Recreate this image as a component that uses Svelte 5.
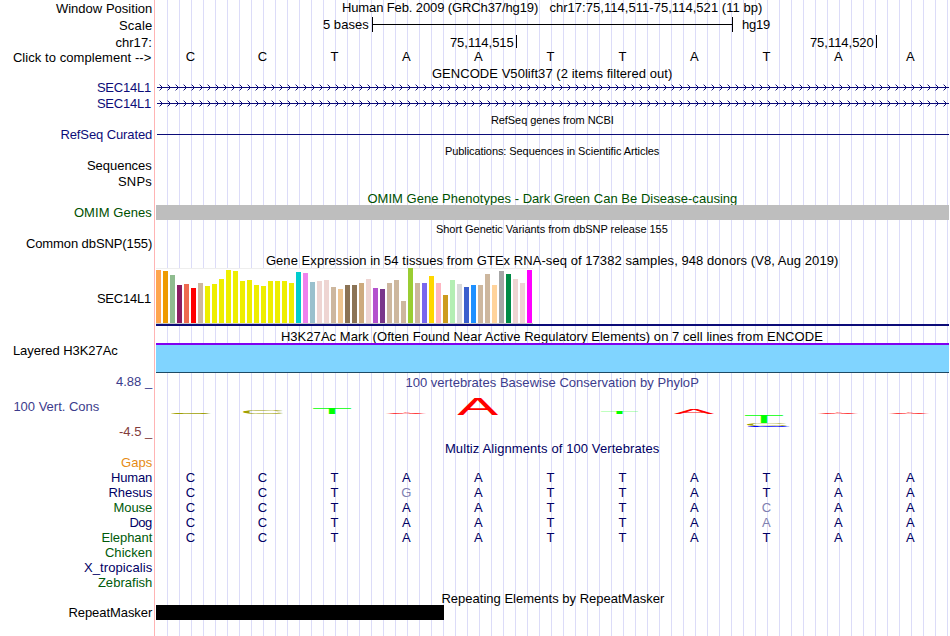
<script>
  const navy = '#0c0c78';
  const darkBlue = '#000064';
  const green = '#005a0a';
  const bases = 'CCTAATTATAA'.split('');

  // gene expression: [color, height]
  const tissues = [
    ['#ffa54f', 53], ['#ee9a00', 52], ['#8fbc8f', 48], ['#8b1c62', 38], ['#ee6a50', 39],
    ['#ff0000', 35], ['#cdb79e', 40], ['#eeee00', 37], ['#eeee00', 39], ['#eeee00', 44],
    ['#eeee00', 53], ['#eeee00', 52], ['#eeee00', 42], ['#eeee00', 43], ['#eeee00', 38],
    ['#eeee00', 37], ['#eeee00', 42], ['#eeee00', 42], ['#eeee00', 42], ['#eeee00', 40],
    ['#00cdcd', 51], ['#ee82ee', 50], ['#9ac0cd', 41], ['#eed5d2', 42], ['#eed5d2', 43],
    ['#cdb79e', 36], ['#eec591', 34], ['#8b7355', 38], ['#8b7355', 38], ['#cdaa7d', 40],
    ['#eed5d2', 44], ['#b452cd', 35], ['#7a378b', 34], ['#cdb79e', 40], ['#cdb79e', 43],
    ['#cdb79e', 22], ['#9acd32', 55], ['#cdb79e', 40], ['#7a67ee', 40], ['#ffd700', 47],
    ['#ffb6c1', 40], ['#cd9b1d', 28], ['#b4eeb4', 43], ['#d9d9d9', 39], ['#3a5fcd', 36],
    ['#1e90ff', 38], ['#cdb79e', 38], ['#cdb79e', 49], ['#ffd39b', 38], ['#a6a6a6', 52],
    ['#008b45', 49], ['#eed5d2', 44], ['#eed5d2', 40], ['#ff00ff', 53]
  ];

  // ink bounds of each glyph at font-size 10: left, width, height
  const glyphs = {
    A: { left: 0.04, width: 6.59, height: 6.88, color: '#ff0000' },
    C: { left: 0.5, width: 6.3, height: 7.1, color: '#a0a000' },
    G: { left: 0.5, width: 6.6, height: 7.1, color: '#0000ff' },
    T: { left: 0.22, width: 5.66, height: 6.88, color: '#00ff00' }
  };

  // conservation logo: letter, left, width, top, bottom
  const logo = [
    ['C', 174, 34, 22.4, 23.6], ['C', 243, 40, 20.6, 23.8], ['T', 313, 38, 17.5, 24],
    ['A', 389, 34, 23.1, 23.9], ['A', 457.5, 40.5, 8, 25], ['T', 601, 37, 22, 24],
    ['A', 674, 40, 19.2, 24], ['T', 745, 38, 25.6, 33], ['C', 747, 40, 33.4, 35.8],
    ['G', 750, 37, 36.1, 36.9], ['A', 821, 34, 23.1, 23.9], ['A', 892, 34, 23.1, 23.9]
  ];

  const side = (text, x, w, y, color = '#000') => ({ text, x, w, y, color });
  const title = (h, text, x, w, y, color = '#000', small = false, labels = []) =>
    ({ h, labels, titles: [{ text, x, w, y, color, small }] });
  const species = (name, x, color, seq = '', diff = -1) =>
    ({ h: 15, labels: [side(name, x, 152 - x, 11, color)], kind: 'seq', seq: seq.split(''), diff, color: darkBlue, y: 11 });

  const rows = [
    {
      h: 16,
      labels: [side('Window Position', 56.5, 95.5, 13)],
      titles: [
        { text: 'Human Feb. 2009 (GRCh37/hg19)', x: 342.5, w: 195.5, y: 12 },
        { text: 'chr17:75,114,511-75,114,521 (11 bp)', x: 550, w: 212, y: 12 }
      ]
    },
    {
      h: 17,
      labels: [side('Scale', 119.5, 32.5, 14)],
      titles: [
        { text: '5 bases', x: 323.5, w: 45, y: 13 },
        { text: 'hg19', x: 742.5, w: 27.5, y: 13 }
      ],
      kind: 'scale'
    },
    {
      h: 15,
      labels: [side('chr17:', 116, 35.5, 14)],
      titles: [
        { text: '75,114,515', x: 450.5, w: 63, y: 14 },
        { text: '75,114,520', x: 810.5, w: 63, y: 14 }
      ],
      kind: 'ruler'
    },
    { h: 17, labels: [side('Click to complement -->', 13.5, 137.5, 14)], kind: 'seq', seq: bases, color: '#000', y: 13 },
    title(15, 'GENCODE V50lift37 (2 items filtered out)', 432.5, 239.5, 13),
    { h: 16, labels: [side('SEC14L1', 97.5, 53.5, 12, navy)], kind: 'gene' },
    { h: 16, labels: [side('SEC14L1', 97.5, 53.5, 12, navy)], kind: 'gene' },
    title(15, 'RefSeq genes from NCBI', 491.5, 122, 12, '#000', true),
    { h: 16, labels: [side('RefSeq Curated', 61, 91, 12, navy)], kind: 'line' },
    title(15, 'Publications: Sequences in Scientific Articles', 445.5, 213.5, 12, '#000', true),
    { h: 16, labels: [side('Sequences', 87.5, 64, 12)] },
    { h: 16, labels: [side('SNPs', 118.5, 33, 12)] },
    title(15, 'OMIM Gene Phenotypes - Dark Green Can Be Disease-causing', 368, 369, 13, '#005000'),
    { h: 16, labels: [side('OMIM Genes', 74.5, 77, 12, '#005000')], kind: 'block', width: 793, fill: '#bebebe' },
    title(15, 'Short Genetic Variants from dbSNP release 155', 436.5, 231, 12, '#000', true),
    { h: 16, labels: [side('Common dbSNP(155)', 26.5, 125.5, 12)] },
    title(16, 'Gene Expression in 54 tissues from GTEx RNA-seq of 17382 samples, 948 donors (V8, Aug 2019)', 266.5, 571.5, 13),
    { h: 61, labels: [side('SEC14L1', 97.5, 53.5, 35)], kind: 'gtex' },
    title(14, 'H3K27Ac Mark (Often Found Near Active Regulatory Elements) on 7 cell lines from ENCODE', 281.5, 541, 12),
    { h: 32, labels: [side('Layered H3K27Ac', 13.5, 104, 12)], kind: 'histone' },
    title(15, '100 vertebrates Basewise Conservation by PhyloP', 406, 292.5, 12, '#3c3c8c', false,
      [side('4.88 _', 116.5, 35.5, 11, '#3c3c8c')]),
    {
      h: 51,
      labels: [side('100 Vert. Cons', 14, 85, 21, '#3c3c8c'), side('-4.5 _', 119.5, 32.5, 46, '#823c3c')],
      kind: 'logo'
    },
    title(15, 'Multiz Alignments of 100 Vertebrates', 445.5, 213.5, 12, darkBlue),
    species('Gaps', 121.5, '#e68c14'),
    species('Human', 111.5, darkBlue, 'CCTAATTATAA'),
    species('Rhesus', 109, darkBlue, 'CCTGATTATAA', 3),
    species('Mouse', 114, green, 'CCTAATTACAA', 8),
    species('Dog', 130, darkBlue, 'CCTAATTAAAA', 8),
    species('Elephant', 102, green, 'CCTAATTATAA'),
    species('Chicken', 105.5, green),
    species('X_tropicalis', 84.5, darkBlue),
    species('Zebrafish', 98.5, green),
    title(14, 'Repeating Elements by RepeatMasker', 442, 222, 12),
    { h: 31, labels: [side('RepeatMasker', 69, 83, 12)], kind: 'block', width: 288, fill: '#000' }
  ];

  // stepped one-pixel chevrons, every 8px along the gene
  const steps = Array.from({ length: 99 }, (_, i) => 160 + i * 8);
  const arrows = steps.map((x) => `M${x} 5h1v1h-1zM${x + 1} 6h1v1h-1zM${x + 2} 7h1v1h-1zM${x + 1} 8h1v1h-1zM${x} 9h1v1h-1z`).join('');
  const arrowEnds = steps.map((x) => `M${x - 1} 4h1v1h-1zM${x - 1} 10h1v1h-1z`).join('');
</script>

{#snippet line(t)}
  <text class:small={t.small} x={t.x - 0.6} y={t.y} textLength={t.w + 0.9} fill={t.color ?? '#000'}>{t.text}</text>
{/snippet}

<main class="browser">
  {#each rows as row}
    <div class="track">
      <svg class="side" width="154" height={row.h}>
        {#each row.labels as label}
          {@render line(label)}
        {/each}
      </svg>

      <svg class="plot" width="793" height={row.h} viewBox="156 0 793 {row.h}">
        {#each row.titles ?? [] as t}
          {@render line(t)}
        {/each}

        {#if row.kind === 'scale'}
          <path class="ink" d="M372.5 1v15M732.5 1v15M372 8.5h361" />
        {:else if row.kind === 'ruler'}
          <path class="ink" d="M516.5 2v13M876.5 2v13" />
        {:else if row.kind === 'seq'}
          {#each row.seq as base, i}
            <text class="base" x={190.4 + i * 72} y={row.y} fill={i === row.diff ? '#8080b0' : row.color}>{base}</text>
          {/each}
        {:else if row.kind === 'gene'}
          <rect x="157" y="7" width="792" height="1" fill={navy} />
          <path class="arrows" d={arrows} />
          <path class="arrows faint" d={arrowEnds} />
        {:else if row.kind === 'line'}
          <rect x="157" y="7" width="792" height="1" fill={navy} />
        {:else if row.kind === 'block'}
          <rect x="156" y="0" width={row.width} height="15" fill={row.fill} />
        {:else if row.kind === 'gtex'}
          <rect x="156" y="0" width="377" height="56" fill="#fff" />
          <rect x="156" y="0" width="377" height="1" fill="#eee" />
          <rect x="156" y="55" width="377" height="1" fill="#c8c8c8" />
          {#each tissues as [color, height], i}
            <rect x={156 + i * 7} y={55 - height} width="5" {height} fill={color} />
          {/each}
          <rect x="156" y="56" width="793" height="2" fill={navy} />
        {:else if row.kind === 'histone'}
          <rect x="156" y="0" width="793" height="2" fill="#8000f0" />
          <rect x="156" y="2" width="793" height="27" fill="#80d4ff" />
          <rect x="156" y="29" width="793" height="1" fill="#1e4a64" />
        {:else if row.kind === 'logo'}
          {#each logo as [letter, x, width, top, bottom]}
            {@const g = glyphs[letter]}
            <text
              class="logo"
              class:flat={bottom - top < 1.5}
              fill={g.color}
              stroke={g.color}
              transform="translate({x} {bottom}) scale({width / g.width} {(bottom - top) / g.height}) translate({-g.left} 0)"
            >{letter}</text>
          {/each}
        {/if}
      </svg>
    </div>
  {/each}
</main>

<style>
  :global(body) {
    background: #fff;
  }

  .browser {
    width: 950px;
    height: 636px;
    overflow: hidden;
    font-family: "Liberation Sans", Arial, sans-serif;
    font-size: 13px;
    background-image:
      linear-gradient(#ffb4b4, #ffb4b4),
      repeating-linear-gradient(to right, transparent 0 11px, #dcdcf8 11px 12px);
    background-size: 1px 100%, 793px 100%;
    background-position: 154px 0, 156px 0;
    background-repeat: no-repeat;
  }

  .track {
    display: flex;
    gap: 2px;
  }

  svg {
    display: block;
    flex: none;
    overflow: visible;
  }

  text {
    white-space: pre;
  }

  .small {
    font-size: 11px;
  }

  .base {
    text-anchor: middle;
  }

  .ink {
    fill: none;
    stroke: #000;
  }

  .arrows {
    fill: #0c0c78;
    shape-rendering: crispEdges;
  }

  .faint {
    opacity: 0.4;
  }

  .logo {
    font-size: 10px;
    stroke-width: 0;
  }

  .flat {
    stroke-width: 1px;
  }
</style>
